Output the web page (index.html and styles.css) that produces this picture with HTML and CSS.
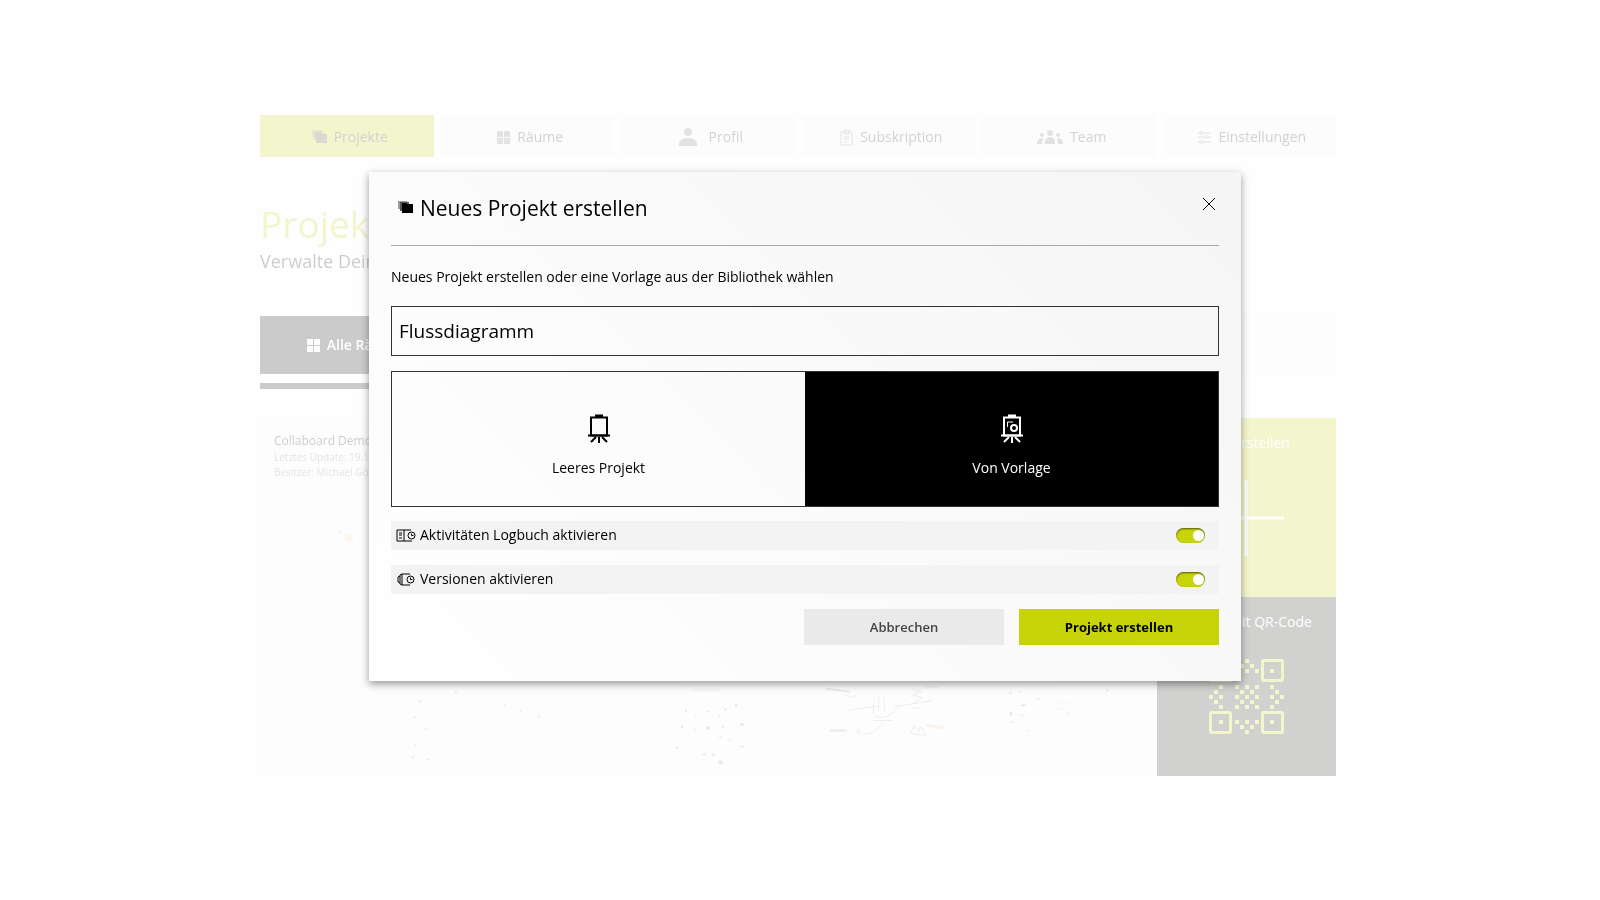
FILE: index.html
```html
<!DOCTYPE html>
<html lang="de">
<head>
    <meta charset="UTF-8">
    <meta name="viewport" content="width=device-width, initial-scale=1.0">
    <title>Neues Projekt erstellen</title>
    <link rel="stylesheet" href="styles.css">
</head>
<body>

    <div class="page">
        <nav class="tabs">
            <a href="#" class="tab active">
                <svg width="15" height="14" viewBox="0 0 15 14"><path d="M0 0h9v8H0z" opacity=".4"/><path d="M2 1h9v9H2z" opacity=".6"/><path d="M4 3h4l1 1h6v9H4z"/></svg>
                Projekte
            </a>
            <a href="#" class="tab">
                <svg width="13" height="13" viewBox="0 0 13 13"><path d="M0 0h6v6H0zM7 0h6v6H7zM0 7h6v6H0zM7 7h6v6H7z"/></svg>
                Räume
            </a>
            <a href="#" class="tab wide">
                <svg width="18" height="18" viewBox="0 0 18 18"><circle cx="9" cy="4" r="4"/><path d="M0 18v-3c0-3 4-5 9-5s9 2 9 5v3z"/></svg>
                Profil
            </a>
            <a href="#" class="tab">
                <svg class="line" width="13" height="17" viewBox="0 0 13 17"><path d="M1 3h11v13H1zM4 1h5v4H4zM4 8h5M4 10h5M4 13h3"/></svg>
                Subskription
            </a>
            <a href="#" class="tab">
                <svg width="26" height="14" viewBox="0 0 26 14"><circle cx="13" cy="3" r="3"/><path d="M8 14v-3q1-4 5-4t5 4v3z"/><circle cx="5" cy="5" r="2"/><circle cx="21" cy="5" r="2"/><path d="M0 14v-2q1-4 6-4l-1 6zM26 14v-2q-1-4-6-4l1 6z"/></svg>
                Team
            </a>
            <a href="#" class="tab">
                <svg class="line" width="13" height="13" viewBox="0 0 13 13"><path d="M0 2h2M5 2h8M0 6h7M10 6h3M0 11h2M5 11h8"/><circle cx="3.500" cy="2" r="1.500"/><circle cx="8.500" cy="6" r="1.500"/><circle cx="3.500" cy="11" r="1.500"/></svg>
                Einstellungen
            </a>
        </nav>

        <h1 class="page-title">Projekte</h1>
        <p class="page-subtitle">Verwalte Deine</p>

        <div class="rooms">
            <a href="#" class="room">
                <svg width="13" height="13" viewBox="0 0 13 13"><path d="M0 0h6v6H0zM7 0h6v6H7zM0 7h6v6H0zM7 7h6v6H7z"/></svg>
                Alle Räume
            </a>
        </div>
        <div class="room-line"></div>

        <div class="board">
            <div class="projects">
                <div class="card">
                    <div class="card-name">Collaboard Demo</div>
                    <div class="card-info">Letztes Update: 19.1</div>
                    <div class="card-info">Besitzer: Michael Gö</div>
                    <svg width="60" height="40" viewBox="0 0 60 40"><path d="M0 12h3v3H0z" fill="#b5dcd8"/><path d="M7 16h8v7H7z" fill="#ffd5ae"/><path d="M12 16h3v4h-3z" fill="#f7e08a"/></svg>
                </div>
                <div class="card"></div>
                <div class="card"></div>
                <div class="card"></div>
                <div class="card"></div>

                <!-- zweite Reihe: Vorschaubilder -->
                <div class="card preview">
                    <svg viewBox="0 0 180 180"><path fill="#aaa" d="M159 104h3v2h-3zM154 120h3v2h-3zM165 132h3v2h-3zM154 148h3v2h-3zM167 162h3v2h-3zM152 160h3v2h-3z"/></svg>
                </div>
                <div class="card preview">
                    <svg viewBox="0 0 180 180"><path fill="#aaa" d="M16 94h2v2h-2zM65 108h3v2h-3zM81 113h3v2h-3zM99 119h3v2h-3z"/></svg>
                </div>
                <div class="card preview">
                    <svg viewBox="0 0 180 180"><path fill="#e3d8d0" d="M75 92h26v3H75z"/><path fill="#777" d="M66 113h2v2h-2zM88 114h2v2h-2zM106 112h2v2h-2zM116 108h3v2h-3zM62 129h2v2h-2zM88 130h3v3h-3zM103 129h2v2h-2zM122 127h3v2h-3z"/><path fill="#aba" d="M99 119h3v2h-3zM76 119h2v2h-2zM100 139h3v2h-3zM110 143h2v2h-2zM75 132h2v2h-2z"/><path fill="#999" d="M122 149h3v2h-3zM57 150h3v2h-3zM84 157h3v2h-3zM93 157h3v2h-3zM100 164h4v4h-4z"/></svg>
                </div>
                <div class="card preview">
                    <svg class="sketch" viewBox="0 0 180 180"><path d="M50 114q20-4 31-4M97 110l38-6M77 100l-2 17M81 100v14M86 100l1 15M77 120q14 4 23-9M76 124h18M85 127l-9 9-11 2M46 98l10 3 3-4M115 112l8-1M113 137l4-8 4 6 2-5 6 9zM57 137l4-4 1 8"/><path d="M115 92l9 3-8 4 9 2-8 5M123 92l-9 8"/><path d="M28 92l24 3M32 134h17" stroke="#999" stroke-width="2"/><path d="M125 90h17" stroke="#bcd3bd" stroke-width="2"/><path d="M128 129l18 2" stroke="#ffbd9e" stroke-width="3"/><path d="M19 162h138V90" stroke="#e5e5e5"/></svg>
                </div>
                <div class="card preview">
                    <svg viewBox="0 0 180 180"><path fill="#777" d="M43 109l6-2-2 3zM33 115h2v4h-2zM33 124l4 2h-3zM44 118h2v1h-2z"/><path fill="#aaa" d="M32 95h3v2h-3zM59 101h5v2h-5zM42 94h2v2h-2zM129 93h3v2h-3zM50 134h3v1h-3z"/><path fill="#f0d5b0" d="M80 106h10v1H80zM90 96h2v2h-2zM91 105h2v2h-2z"/><path fill="#bcd6e0" d="M80 112h10v1H80zM91 116h2v3h-2z"/></svg>
                </div>
            </div>

            <div class="actions">
                <button class="tile create">
                    Neu erstellen
                    <svg width="76" height="76" viewBox="0 0 76 76"><path d="M38 0v76M0 38h76" stroke="#fff" stroke-width="3"/></svg>
                </button>
                <button class="tile scan">
                    Beitritt mit QR-Code
                    <svg width="75" height="75" viewBox="0 0 75 75">
                        <g fill="none" stroke="#c8d40a" stroke-width="3"><rect x="1.500" y="1.500" width="20" height="20" rx="1"/><rect x="53.500" y="1.500" width="20" height="20" rx="1"/><rect x="1.500" y="53.500" width="20" height="20" rx="1"/><rect x="53.500" y="53.500" width="20" height="20" rx="1"/></g>
                        <g fill="#c8d40a">
                            <path d="M10 10h4v4h-4zM61 10h4v4h-4zM10 61h4v4h-4zM61 61h4v4h-4z"/>
                            <path d="M36 0h4v4h-4zM31 5h4v4h-4zM41 5h4v4h-4zM26 10h4v4h-4zM36 10h4v4h-4zM46 10h4v4h-4z"/>
                            <path d="M26 26h4v4h-4zM36 26h4v4h-4zM46 26h4v4h-4zM31 31h4v4h-4zM41 31h4v4h-4zM26 36h4v4h-4zM36 36h4v4h-4zM46 36h4v4h-4zM31 41h4v4h-4zM41 41h4v4h-4zM26 46h4v4h-4zM36 46h4v4h-4zM46 46h4v4h-4z"/>
                            <path d="M10 26h4v4h-4zM5 31h4v4H5zM0 36h4v4H0zM10 36h4v4h-4zM5 41h4v4H5zM10 46h4v4h-4z"/>
                            <path d="M61 26h4v4h-4zM66 31h4v4h-4zM71 36h4v4h-4zM61 36h4v4h-4zM66 41h4v4h-4zM61 46h4v4h-4z"/>
                            <path d="M26 61h4v4h-4zM36 61h4v4h-4zM46 61h4v4h-4zM31 66h4v4h-4zM41 66h4v4h-4zM36 71h4v4h-4z"/>
                        </g>
                    </svg>
                </button>
            </div>
        </div>
    </div>

    <div class="overlay">
        <form class="modal" role="dialog" aria-labelledby="modal-title">
            <div class="modal-header">
                <svg width="15" height="14" viewBox="0 0 15 14"><path d="M0 0h9v8H0z" fill="#999"/><path d="M2 1h9v9H2z" fill="#555"/><path d="M4 2h4l1 1h6v9H4z"/></svg>
                <h2 id="modal-title">Neues Projekt erstellen</h2>
                <button type="button" class="close" aria-label="Schließen">
                    <svg class="line" width="14" height="14" viewBox="0 0 14 14"><path d="M1 1l12 12M13 1L1 13"/></svg>
                </button>
            </div>

            <label class="intro" for="name">Neues Projekt erstellen oder eine Vorlage aus der Bibliothek wählen</label>
            <input type="text" class="name-input" id="name" value="Flussdiagramm">

            <div class="choices">
                <button type="button" class="choice">
                    <svg class="line" width="22" height="30" viewBox="0 0 22 30"><path d="M3 3.500h16v18H3z" stroke-width="2"/><path d="M7 2h8" stroke-width="3"/><path d="M0 21.500h22" stroke-width="2"/><path d="M8 23l-5 5M11 23v6M14 23l5 5" stroke-width="2"/></svg>
                    Leeres Projekt
                </button>
                <button type="button" class="choice selected">
                    <svg class="line" width="22" height="30" viewBox="0 0 22 30"><path d="M3 3.500h16v18H3z" stroke-width="2"/><path d="M7 2h8" stroke-width="3"/><path d="M0 21.500h22" stroke-width="2"/><path d="M8 23l-5 5M11 23v6M14 23l5 5" stroke-width="2"/><path d="M6.500 13V8H12"/><circle cx="13" cy="14" r="3" stroke-width="2"/></svg>
                    Von Vorlage
                </button>
            </div>

            <div class="option">
                <svg class="line" width="20" height="13" viewBox="0 0 20 13"><path d="M15 1H1v11h15M8 1v11M3 4h3M3 6h3M3 9h3"/><circle cx="15.500" cy="6.500" r="3.500"/><path d="M15.500 4.500v2h2"/></svg>
                <label for="log">Aktivitäten Logbuch aktivieren</label>
                <input type="checkbox" class="toggle" id="log" checked>
            </div>
            <div class="option">
                <svg class="line" width="20" height="13" viewBox="0 0 20 13"><path d="M14 1H6v11h8M6 1L4 2v9l2 1M4 3L2 4v5l2 1"/><circle cx="14.500" cy="6.500" r="3.500"/><path d="M14.500 4.500v2h2"/></svg>
                <label for="versions">Versionen aktivieren</label>
                <input type="checkbox" class="toggle" id="versions" checked>
            </div>

            <div class="buttons">
                <button type="button" class="button cancel">Abbrechen</button>
                <button type="submit" class="button submit">Projekt erstellen</button>
            </div>
        </form>
    </div>

</body>
</html>
```
FILE: styles.css
```css
* {
    box-sizing: border-box;
}
body {
    margin: 0;
    font-family: "Segoe UI", "Open Sans", "Noto Sans", sans-serif;
    font-size: 14px;
    line-height: 20px;
    color: #000;
    background: #fefefe;
}
button, input {
    font: inherit;
    color: inherit;
    margin: 0;
}
button {
    cursor: pointer;
}
svg {
    flex: none;
    fill: currentColor;
}
.line {
    fill: none;
    stroke: currentColor;
}

/* Hintergrundseite */
.page {
    padding: 115px 16.5% 0 16.25%;
    opacity: 0.2;
}
.tabs {
    display: grid;
    grid-template-columns: repeat(6, 1fr);
    gap: 7px;
}
.tab {
    display: flex;
    align-items: center;
    justify-content: center;
    gap: 7px;
    height: 42px;
    padding: 2px 0 0 6px;
    background: #f5f5f5;
    color: #222;
    text-decoration: none;
}
.tab svg {
    opacity: 0.6;
}
.tab.wide {
    gap: 12px;
}
.tab.active {
    background: #c8d40a;
}
.tab.active svg {
    opacity: 0.8;
}
.page-title {
    margin: 42px 0 0;
    font-size: 37px;
    line-height: 50px;
    font-weight: 400;
    color: #c8d40a;
}
.page-subtitle {
    margin: 0;
    font-size: 18px;
    line-height: 24px;
}
.rooms {
    margin-top: 43px;
    background: #f8f8f8;
}
.room {
    display: flex;
    align-items: center;
    justify-content: center;
    gap: 7px;
    width: 18%;
    height: 58px;
    padding-right: 4px;
    background: #000;
    color: #fff;
    font-weight: 600;
    text-decoration: none;
}
.room-line {
    width: 18%;
    height: 6px;
    margin-top: 9px;
    background: #000;
}
.board {
    display: grid;
    grid-template-columns: 5fr 1fr;
    margin-top: 29px;
}
.projects {
    display: grid;
    grid-template-columns: repeat(5, 1fr);
    grid-template-rows: 179px 179px;
}
.card {
    padding: 14px;
    background: #fafafa;
    overflow: hidden;
    white-space: nowrap;
}
.card svg {
    display: block;
    margin: 38px 0 0 64px;
}
.card-name {
    font-size: 12px;
    line-height: 18px;
}
.card-info {
    font-size: 10px;
    line-height: 15px;
    color: #777;
}
.card.preview {
    padding: 0;
}
.card.preview svg {
    width: 100%;
    margin: 0;
}
.card .sketch {
    fill: none;
    stroke: #aaa;
}
.actions {
    display: grid;
    grid-template-rows: 179px 179px;
}
.tile {
    display: flex;
    flex-direction: column;
    align-items: center;
    gap: 27px;
    padding: 15px 0;
    border: none;
    color: #fff;
}
.tile.create {
    background: #c8d40a;
}
.tile.scan {
    background: #1f1f1b;
}

/* Dialog */
.overlay {
    position: fixed;
    inset: 0;
    display: flex;
    align-items: center;
    justify-content: center;
    padding: 0 0 48px 10px;
}
.modal {
    width: 54.5vw;
    padding: 22px 22px 36px;
    background: linear-gradient(45deg, #fefefe 10%, #f5f5f5);
    box-shadow: 0 3px 8px rgba(0, 0, 0, 0.4);
}
.modal-header {
    display: flex;
    align-items: center;
    gap: 7px;
    height: 52px;
    padding: 0 0 22px 7px;
    border-bottom: 1px solid #aaa;
}
.modal-header h2 {
    margin: 0;
    font-size: 21px;
    line-height: 30px;
    font-weight: 400;
}
.close {
    display: flex;
    align-self: flex-start;
    margin-left: auto;
    padding: 3px;
    border: none;
    background: none;
}
.intro {
    display: block;
    margin: 21px 0 19px;
}
.name-input {
    display: block;
    width: 100%;
    height: 50px;
    padding: 0 7px;
    border: 1px solid #333;
    background: transparent;
    font-size: 19px;
}
.choices {
    display: grid;
    grid-template-columns: 1fr 1fr;
    height: 136px;
    margin: 15px 0 14px;
    border: 1px solid #333;
}
.choice {
    display: flex;
    flex-direction: column;
    align-items: center;
    justify-content: center;
    gap: 14px;
    padding: 15px 0 0;
    border: none;
    background: transparent;
}
.choice.selected {
    background: #000;
    color: #fff;
}
.option {
    display: flex;
    align-items: center;
    gap: 4px;
    height: 29px;
    margin-bottom: 15px;
    padding: 0 14px 0 5px;
    background: #f3f3f3;
}
.toggle {
    appearance: none;
    display: flex;
    justify-content: flex-end;
    width: 29px;
    height: 15px;
    margin-left: auto;
    padding: 2px 1px;
    border-radius: 8px;
    background: #c8d40a;
    box-shadow: inset 0 1px 2px rgba(0, 0, 0, 0.6);
}
.toggle::after {
    content: "";
    width: 11px;
    height: 11px;
    border-radius: 50%;
    background: #fff;
}
.buttons {
    display: flex;
    justify-content: flex-end;
    gap: 15px;
}
.button {
    width: 200px;
    height: 36px;
    border: none;
    font-size: 13px;
    font-weight: 700;
}
.cancel {
    background: #eaeaea;
    color: #444;
    font-weight: 600;
}
.submit {
    background: #c8d40a;
}
```
